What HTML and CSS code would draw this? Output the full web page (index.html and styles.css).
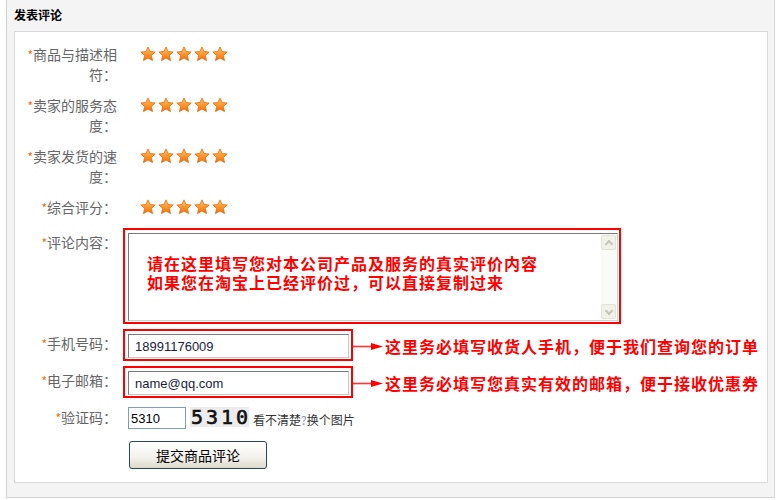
FILE: index.html
```html
<!DOCTYPE html>
<html lang="zh-CN">
<head>
    <meta charset="UTF-8">
    <title>发表评论</title>
    <link rel="stylesheet" href="styles.css">
</head>
<body>

<svg class="defs" width="0" height="0">
    <defs>
        <linearGradient id="starFill" x1="0" y1="0" x2="0" y2="1">
            <stop offset="0" stop-color="#ffc56e"/>
            <stop offset="0.5" stop-color="#ff9a2e"/>
            <stop offset="1" stop-color="#f06a0c"/>
        </linearGradient>
        <symbol id="star" viewBox="0 0 16 16">
            <polygon points="8,0.9 10.1,5.5 15.2,6 11.4,9.4 12.5,14.6 8,12 3.5,14.6 4.6,9.4 0.8,6 5.9,5.5"
                     fill="url(#starFill)" stroke="#e56a10" stroke-width="0.8" stroke-linejoin="round"/>
        </symbol>
    </defs>
</svg>

<div class="panel">
    <div class="panel-title">发表评论</div>

    <div class="panel-body">
        <div class="row">
            <div class="lbl"><span class="req">*</span>商品与描述相符：</div>
            <div class="stars">
                <svg><use href="#star"/></svg><svg><use href="#star"/></svg><svg><use href="#star"/></svg><svg><use href="#star"/></svg><svg><use href="#star"/></svg>
            </div>
        </div>

        <div class="row">
            <div class="lbl"><span class="req">*</span>卖家的服务态度：</div>
            <div class="stars">
                <svg><use href="#star"/></svg><svg><use href="#star"/></svg><svg><use href="#star"/></svg><svg><use href="#star"/></svg><svg><use href="#star"/></svg>
            </div>
        </div>

        <div class="row">
            <div class="lbl"><span class="req">*</span>卖家发货的速度：</div>
            <div class="stars">
                <svg><use href="#star"/></svg><svg><use href="#star"/></svg><svg><use href="#star"/></svg><svg><use href="#star"/></svg><svg><use href="#star"/></svg>
            </div>
        </div>

        <div class="row">
            <div class="lbl"><span class="req">*</span>综合评分：</div>
            <div class="stars">
                <svg><use href="#star"/></svg><svg><use href="#star"/></svg><svg><use href="#star"/></svg><svg><use href="#star"/></svg><svg><use href="#star"/></svg>
            </div>
        </div>

        <div class="row row-box">
            <div class="lbl lbl-pad"><span class="req">*</span>评论内容：</div>
            <div class="redbox redbox-area">
                <div class="txt">
                    <div class="txt-text">
                        <div class="txt-line">请在这里填写您对本公司产品及服务的真实评价内容</div>
                        <div class="txt-line">如果您在淘宝上已经评价过，可以直接复制过来</div>
                    </div>
                    <div class="scroll">
                        <div class="scroll-btn"><span class="chev chev-up"></span></div>
                        <div class="scroll-btn"><span class="chev chev-down"></span></div>
                    </div>
                </div>
            </div>
        </div>

        <div class="row row-box">
            <div class="lbl lbl-pad"><span class="req">*</span>手机号码：</div>
            <div class="redbox">
                <input type="text" class="field" value="18991176009">
            </div>
            <svg class="arrow" width="30" height="9" viewBox="0 0 30 9">
                <line x1="0" y1="4.5" x2="22" y2="4.5" stroke="#f33" stroke-width="1.6"/>
                <polygon points="18,1 30,4.5 18,8" fill="#f00"/>
            </svg>
            <div class="tip">这里务必填写收货人手机，便于我们查询您的订单</div>
        </div>

        <div class="row row-mail">
            <div class="lbl lbl-pad"><span class="req">*</span>电子邮箱：</div>
            <div class="redbox">
                <input type="text" class="field" value="name@qq.com">
            </div>
            <svg class="arrow" width="30" height="9" viewBox="0 0 30 9">
                <line x1="0" y1="4.5" x2="22" y2="4.5" stroke="#f33" stroke-width="1.6"/>
                <polygon points="18,1 30,4.5 18,8" fill="#f00"/>
            </svg>
            <div class="tip">这里务必填写您真实有效的邮箱，便于接收优惠券</div>
        </div>

        <div class="row row-code">
            <div class="lbl"><span class="req">*</span>验证码：</div>
            <input type="text" class="code" value="5310">
            <span class="captcha">5310</span>
            <span class="refresh">看不清楚<span class="q">?</span>换个图片</span>
        </div>

        <div class="row">
            <div class="lbl"></div>
            <button class="submit">提交商品评论</button>
        </div>
    </div>
</div>

</body>
</html>
```

FILE: styles.css
```css
body {
    margin: 0;
    background-color: #fff;
    font-family: "Noto Sans CJK SC", sans-serif;
    color: #333;
}

.defs {
    position: absolute;
    width: 0;
    height: 0;
}

.panel {
    width: 769px;
    margin-left: 6px;
    padding: 0 6px 14px 7px;
    box-sizing: border-box;
    background-color: #f4f4f4;
    border: 1px solid #d4d4d4;
    border-top: none;
}

.panel-title {
    height: 31px;
    line-height: 30px;
    font-size: 12px;
    font-weight: bold;
    color: #000;
}

.panel-body {
    background-color: #fff;
    border: 1px solid #dadada;
    padding: 12px 0 13px 10px;
}

.row {
    display: flex;
    align-items: flex-start;
    margin-bottom: 11px;
}

.row:last-child {
    margin-bottom: 0;
}

.row-box {
    margin-bottom: 5px;
}

.row-mail {
    margin-bottom: 9px;
}

.row-code {
    margin-bottom: 12px;
}

.lbl {
    width: 92px;
    flex-shrink: 0;
    margin-right: 6px;
    text-align: right;
    font-size: 14px;
    line-height: 20px;
    color: #666;
}

.lbl-pad {
    padding-top: 4px;
}

.req {
    color: #f60;
    font-size: 12px;
    line-height: 0;
}

.stars {
    display: flex;
    align-items: center;
    gap: 2px;
    height: 20px;
    margin-left: 17px;
}

.stars svg {
    width: 16px;
    height: 16px;
}

.redbox {
    display: flex;
    border: 2px solid #f00;
    padding: 3px 2px 1px 3px;
}

.redbox-area {
    padding: 3px 1px 1px 3px;
}

.txt {
    display: flex;
    width: 490px;
    height: 88px;
    box-sizing: border-box;
    border: 1px solid;
    border-color: #7c7c7c #d0d0d0 #d0d0d0 #7c7c7c;
    background-color: #fff;
}

.txt-text {
    flex: 1;
    padding: 20px 0 0 18px;
    color: #f00;
    font-size: 16px;
    font-weight: bold;
    letter-spacing: 1px;
}

.txt-line {
    height: 19px;
    line-height: 19px;
}

.scroll {
    width: 16px;
    display: flex;
    flex-direction: column;
    justify-content: space-between;
    padding: 1px 0;
    background-color: #fafaf6;
}

.scroll-btn {
    width: 15px;
    height: 15px;
    box-sizing: border-box;
    border: 1px solid #e2e2da;
    border-radius: 2px;
    background-color: #f1f1ea;
    display: flex;
    align-items: center;
    justify-content: center;
}

.chev {
    width: 4px;
    height: 4px;
    border-left: 2px solid #c4c4bc;
    border-top: 2px solid #c4c4bc;
}

.chev-up {
    transform: translateY(1px) rotate(45deg);
}

.chev-down {
    transform: translateY(-1px) rotate(225deg);
}

.field {
    width: 221px;
    height: 24px;
    box-sizing: border-box;
    margin: 0;
    padding: 0 6px;
    border: 1px solid;
    border-color: #7c7c7c #c8c8c8 #c8c8c8 #7c7c7c;
    font-family: "Liberation Sans", sans-serif;
    font-size: 13px;
    color: #1c1c3c;
    outline: none;
}

.arrow {
    flex-shrink: 0;
    margin-top: 13px;
}

.tip {
    margin-left: 2px;
    padding-top: 7px;
    color: #f00;
    font-size: 16px;
    font-weight: bold;
    letter-spacing: 1px;
    line-height: 20px;
    white-space: nowrap;
}

.code {
    width: 58px;
    height: 22px;
    box-sizing: border-box;
    margin: 0 0 0 5px;
    padding: 0 2px;
    border: 1px solid #7f9db9;
    font-family: "Liberation Sans", sans-serif;
    font-size: 13px;
    color: #000;
    outline: none;
}

.captcha {
    width: 59px;
    height: 20px;
    margin-left: 4px;
    box-sizing: border-box;
    background-color: #ececec;
    font-family: "DejaVu Sans Mono", monospace;
    font-size: 20px;
    font-weight: normal;
    line-height: 20px;
    letter-spacing: 3px;
    padding-left: 1px;
    color: #111;
    -webkit-text-stroke: 0.6px #111;
}

.refresh {
    margin-left: 4px;
    padding-top: 5px;
    font-size: 12px;
    line-height: 16px;
    color: #333;
}

.refresh .q {
    color: #8a96a8;
}

.submit {
    width: 138px;
    height: 28px;
    margin-left: 6px;
    margin-top: 0;
    padding: 0;
    border: 1px solid #2b4663;
    border-radius: 3px;
    background: linear-gradient(#ffffff, #f3f2ec 60%, #dcd9cc);
    font-family: "Noto Sans CJK SC", sans-serif;
    font-size: 14px;
    color: #000;
}
```
